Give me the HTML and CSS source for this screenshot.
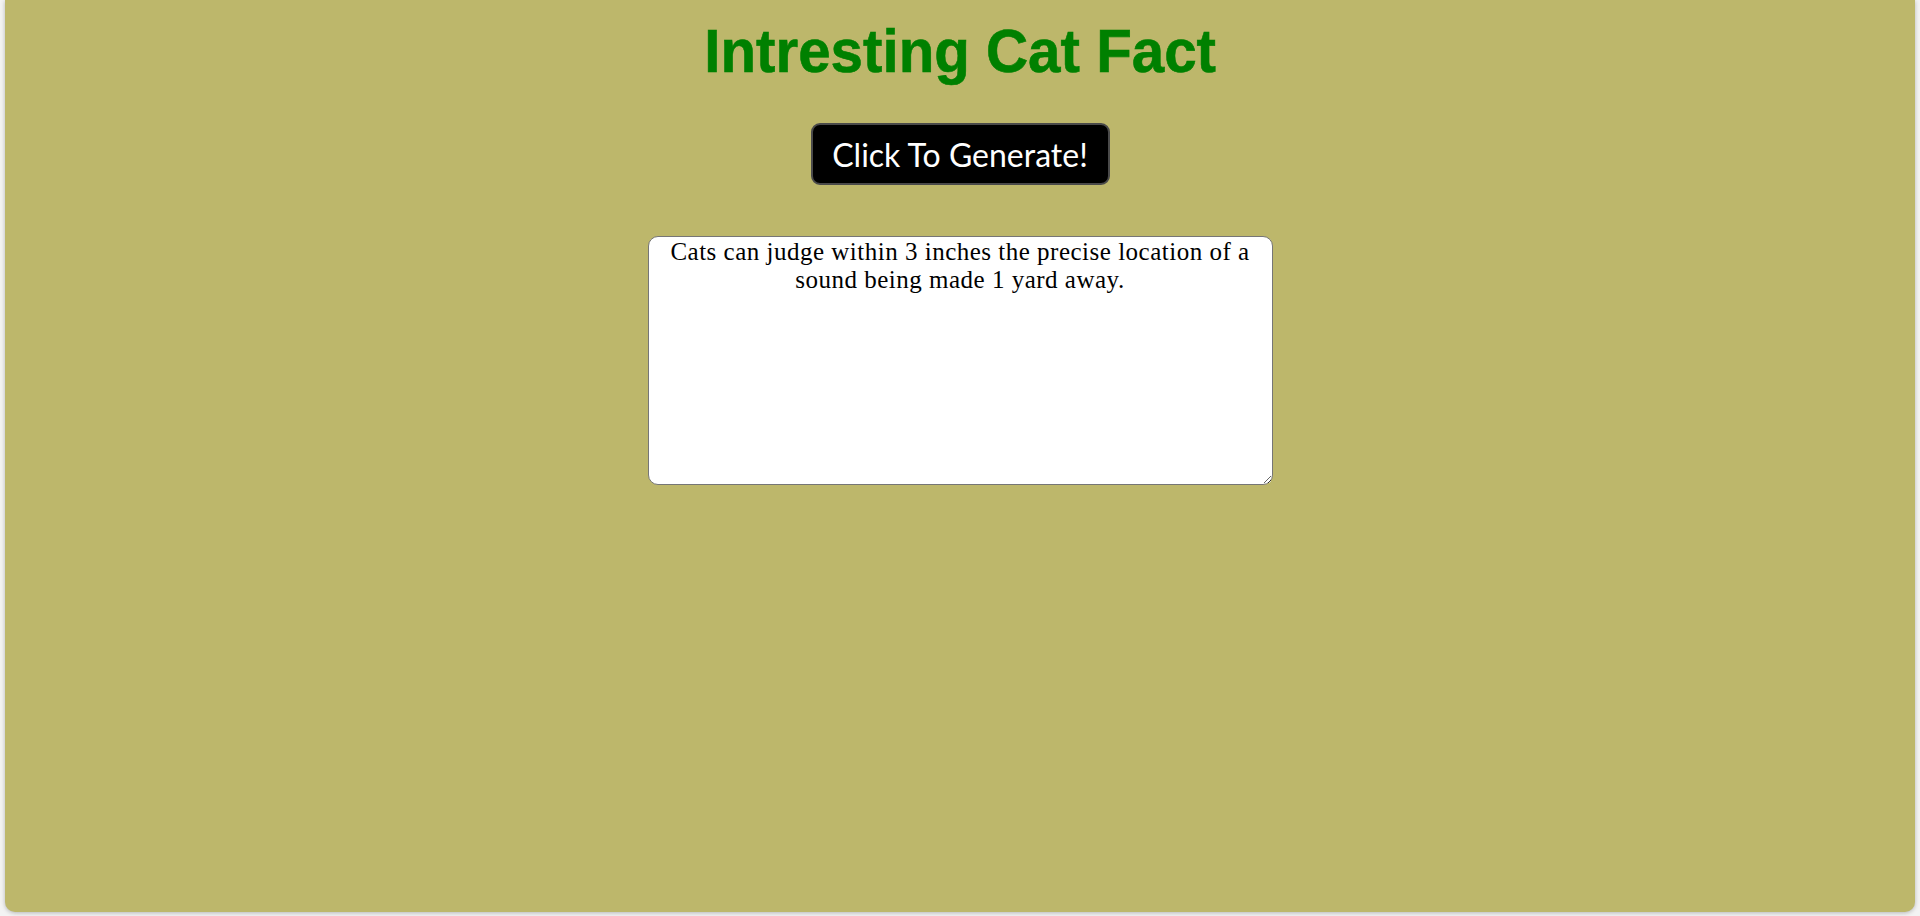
FILE: index.html
```html
<!DOCTYPE html>
<html lang="en">
<head>
<meta charset="utf-8">
<title>Intresting Cat Fact</title>
<link rel="stylesheet" href="styles.css">
</head>
<body>
<main class="card">
  <h1 class="title"><span class="title-text">Intresting Cat Fact</span></h1>
  <button class="gen-btn" type="button">Click To Generate!</button>
  <textarea class="fact" rows="8">Cats can judge within 3 inches the precise location of a sound being made 1 yard away.</textarea>
</main>
</body>
</html>
```

FILE: styles.css
```css
html, body {
  margin: 0;
  padding: 0;
}

body {
  background: #f3f3f3;
  height: 916px;
  overflow: hidden;
}

.card {
  margin: 0 5px;
  height: 912px;
  box-sizing: border-box;
  background: #bdb76b;
  border-radius: 0 0 10px 10px;
  box-shadow: 0 1px 4px rgba(0, 0, 0, 0.25);
  display: flex;
  flex-direction: column;
  align-items: center;
}

.title {
  margin: 15px 0 0;
  font-family: "Liberation Sans", Arial, sans-serif;
  font-weight: bold;
  font-size: 62px;
  color: #008000;
  line-height: normal;
}

.title-text {
  display: inline-block;
  transform: scaleX(0.94);
  -webkit-text-stroke: 0.6px #008000;
}

.gen-btn {
  margin-top: 37px;
  width: 299px;
  height: 62px;
  box-sizing: border-box;
  background: #000;
  color: #fff;
  border: 2px solid #4a4a4a;
  border-radius: 9px;
  font-family: Lato, "DejaVu Sans", sans-serif;
  font-size: 32px;
  padding: 0;
  cursor: pointer;
}

.fact {
  margin-top: 51px;
  width: 625px;
  height: 249px;
  box-sizing: border-box;
  padding: 1px 4px;
  border: 1px solid #767676;
  border-radius: 10px;
  background: #fff;
  color: #000;
  text-align: center;
  font-family: "Liberation Serif", serif;
  font-size: 25px;
  letter-spacing: 0.5px;
  line-height: 28px;
}
```
